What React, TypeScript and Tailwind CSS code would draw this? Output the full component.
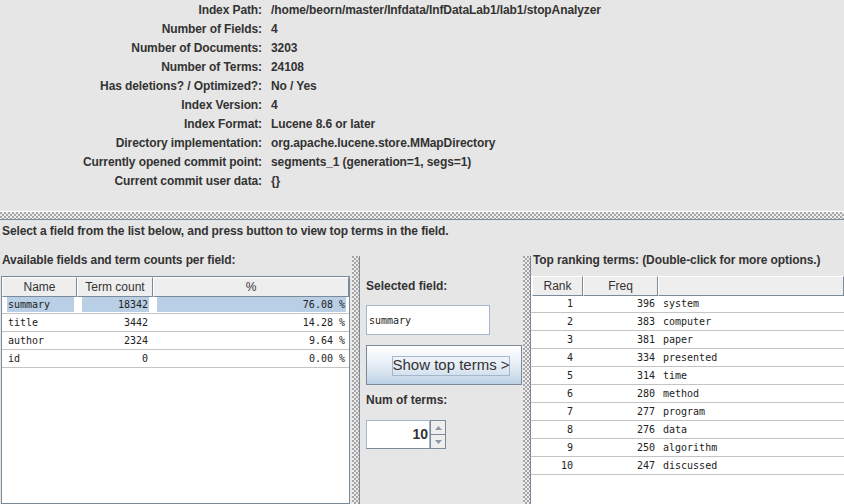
import React from 'react';

const INFO: [string, string][] = [
  ['Index Path:', '/home/beorn/master/Infdata/InfDataLab1/lab1/stopAnalyzer'],
  ['Number of Fields:', '4'],
  ['Number of Documents:', '3203'],
  ['Number of Terms:', '24108'],
  ['Has deletions? / Optimized?:', 'No / Yes'],
  ['Index Version:', '4'],
  ['Index Format:', 'Lucene 8.6 or later'],
  ['Directory implementation:', 'org.apache.lucene.store.MMapDirectory'],
  ['Currently opened commit point:', 'segments_1 (generation=1, segs=1)'],
  ['Current commit user data:', '{}'],
];

const FIELDS = [
  { name: 'summary', count: '18342', pct: '76.08 %' },
  { name: 'title', count: '3442', pct: '14.28 %' },
  { name: 'author', count: '2324', pct: '9.64 %' },
  { name: 'id', count: '0', pct: '0.00 %' },
];

const TERMS: [number, number, string][] = [
  [1, 396, 'system'],
  [2, 383, 'computer'],
  [3, 381, 'paper'],
  [4, 334, 'presented'],
  [5, 314, 'time'],
  [6, 280, 'method'],
  [7, 277, 'program'],
  [8, 276, 'data'],
  [9, 250, 'algorithm'],
  [10, 247, 'discussed'],
];

// metal-style "bumps" texture on the split pane dividers
const bumps =
  'bg-[#ececec] [background-image:radial-gradient(circle_at_1px_1px,#a4a4a4_0.7px,transparent_1px),radial-gradient(circle_at_1px_1px,#a4a4a4_0.7px,transparent_1px)] [background-size:4px_4px] [background-position:0_0,2px_2px]';

function HeaderCell({ children }: { children?: React.ReactNode }) {
  return (
    <div className="h-full flex items-center justify-center bg-[#eeeeee] border-t border-l border-t-white border-l-white border-r border-b border-r-[#7a8a99] border-b-[#7a8a99] text-[12px] text-[#333]">
      {children}
    </div>
  );
}

function Splitter() {
  return <div className={'w-[7px] mt-[3px] shrink-0 ' + bumps} />;
}

export default function App() {
  return (
    <div className="w-[844px] h-[504px] overflow-hidden bg-[#e6e6e6] text-[#333] font-['Liberation_Sans',Arial,sans-serif] flex flex-col">
      {/* index overview */}
      <div className="h-[211px] shrink-0 tracking-[-0.1px]">
        {INFO.map(([label, value]) => (
          <div key={label} className="h-[19px] flex items-center text-[12px] font-bold">
            <div className="w-[262px] text-right">{label}</div>
            <div className="ml-[9px]">{value}</div>
          </div>
        ))}
      </div>

      {/* horizontal divider */}
      <div className={'h-[9px] shrink-0 border-t border-white border-b border-b-[#7a8a99] ' + bumps} />

      <div className="h-[33px] shrink-0 pl-[2px] pt-[4px] text-[12px] font-bold leading-[14px] tracking-[-0.1px]">
        Select a field from the list below, and press button to view top terms in the field.
      </div>

      <div className="flex flex-1 min-h-0">
        {/* fields table */}
        <div className="w-[352px] shrink-0 flex flex-col">
          <div className="pl-[2px] h-[14px] leading-[14px] text-[12px] font-bold tracking-[-0.1px]">
            Available fields and term counts per field:
          </div>
          <div className="mt-[9px] ml-[1px] w-[349px] flex-1 border border-[#7a8a99] bg-white">
            <div className="h-[19px] grid grid-cols-[75px_76px_1fr]">
              <HeaderCell>Name</HeaderCell>
              <HeaderCell>Term count</HeaderCell>
              <HeaderCell>%</HeaderCell>
            </div>
            {FIELDS.map((f, i) => {
              const sel = i === 0;
              const cell = 'h-[15px] flex items-center px-[1px] ' + (sel ? 'bg-[#b8cfe5]' : '');
              return (
                <div
                  key={f.name}
                  className="h-[18px] grid grid-cols-[75px_76px_1fr] items-center border-b border-[#c4c4c4] font-['DejaVu_Sans_Mono',monospace] text-[10px] text-[#222]"
                >
                  <div className="pl-[5px] pr-[3px]">
                    <div className={cell}>{f.name}</div>
                  </div>
                  <div className="pl-[5px] pr-[4px]">
                    <div className={cell + ' justify-end'}>{f.count}</div>
                  </div>
                  <div className="pl-[4px] pr-[3px]">
                    <div className={cell + ' justify-end'}>{f.pct}</div>
                  </div>
                </div>
              );
            })}
          </div>
        </div>

        <Splitter />

        {/* middle controls */}
        <div className="w-[164px] shrink-0 mt-[3px] border-l border-[#7a8a99] pl-[6px] flex flex-col">
          <div className="mt-[23px] h-[14px] leading-[14px] text-[12px] font-bold">Selected field:</div>
          <div className="mt-[12px] w-[124px] h-[30px] bg-white border border-[#a3b8cc] flex items-center pl-[2px] font-['DejaVu_Sans_Mono',monospace] text-[10px] text-[#222]">
            summary
          </div>
          <div className="mt-[10px] w-[156px] h-[40px] border border-[#7a8a99] bg-[linear-gradient(to_bottom,#ffffff_0%,#f3f7fb_25%,#d8e4f0_70%,#bcd1e6_100%)] flex items-start pt-[10px]">
            <div className="ml-[25px] w-[118px] h-[20px] border border-[#a3b8cc] flex items-start justify-center whitespace-nowrap text-[15px] leading-[16px] text-[#333]">
              Show top terms &gt;
            </div>
          </div>
          <div className="mt-[8px] h-[14px] leading-[14px] text-[12px] font-bold">Num of terms:</div>
          <div className="mt-[13px] flex h-[29px] w-[80px]">
            <div className="w-[64px] bg-white border border-[#a3b8cc] border-b-[#7a8a99] flex items-center justify-end pr-[1px] text-[14px] font-bold">
              10
            </div>
            <div className="w-[16px] flex flex-col">
              <div className="h-[15px] bg-[#eeeeee] border border-[#7a8a99] flex items-center justify-center">
                <svg width="7" height="4" viewBox="0 0 7 4">
                  <path d="M0 4 L3.5 0 L7 4 Z" fill="#8a9aaa" />
                </svg>
              </div>
              <div className="h-[14px] bg-[#eeeeee] border border-t-0 border-[#7a8a99] flex items-center justify-center">
                <svg width="7" height="4" viewBox="0 0 7 4">
                  <path d="M0 0 L3.5 4 L7 0 Z" fill="#8a9aaa" />
                </svg>
              </div>
            </div>
          </div>
        </div>

        <Splitter />

        {/* top terms */}
        <div className="flex-1 mt-[3px] border-l border-[#7a8a99] flex flex-col min-w-0">
          <div className="pl-[2px] h-[14px] -mt-[3px] leading-[14px] text-[12px] font-bold whitespace-nowrap tracking-[-0.1px]">
            Top ranking terms: (Double-click for more options.)
          </div>
          <div className="mt-[9px] flex-1 bg-white">
            <div className="h-[19px] grid grid-cols-[51px_75px_1fr] pl-[1px]">
              <HeaderCell>Rank</HeaderCell>
              <HeaderCell>Freq</HeaderCell>
              <HeaderCell />
            </div>
            {TERMS.map(([rank, freq, term]) => (
              <div
                key={rank}
                className="h-[18px] grid grid-cols-[51px_75px_1fr] items-center border-b border-[#c4c4c4] font-['DejaVu_Sans_Mono',monospace] text-[10px] text-[#222]"
              >
                <div className="text-right pr-[9px]">{rank}</div>
                <div className="text-right pr-[2px]">{freq}</div>
                <div className="pl-[6px]">{term}</div>
              </div>
            ))}
          </div>
        </div>
      </div>
    </div>
  );
}
